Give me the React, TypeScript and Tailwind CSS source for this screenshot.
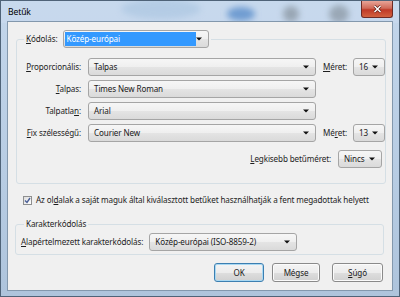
import React from "react";

const font = { fontFamily: '"Noto Sans", "Open Sans", sans-serif' };

function Arrow() {
  return (
    <svg width="6" height="4" viewBox="0 0 6 4" className="shrink-0">
      <path d="M0 0.5 L6 0.5 L3 3.5 Z" fill="#111" />
    </svg>
  );
}

function Select({ cls, text, focused }: { cls: string; text: string; focused?: boolean }) {
  return (
    <div
      className={`flex h-[18px] items-center justify-between rounded-[3px] border border-[#a5a5a5] bg-[linear-gradient(to_bottom,#f6f6f6_0%,#efefef_50%,#e4e4e4_51%,#dadada_100%)] pr-[6px] ${cls}`}
    >
      {focused ? (
        <span className="ml-[1px] flex h-[14px] w-[131px] items-center bg-[#3399ff] pl-[2px] text-white">{text}</span>
      ) : (
        <span className="pl-[5px] text-[#1a1a1a]">{text}</span>
      )}
      <Arrow />
    </div>
  );
}

function Btn({ cls, children, def }: { cls: string; children: React.ReactNode; def?: boolean }) {
  return (
    <div
      className={`flex h-[19px] items-center justify-center rounded-[3px] border ${
        def ? "border-[#3c7fb1] shadow-[inset_0_0_0_1px_#a9d8f2]" : "border-[#8a8a8a] shadow-[inset_0_0_0_1px_#fbfbfb]"
      } bg-[linear-gradient(to_bottom,#f4f4f4_0%,#ececec_50%,#dedede_51%,#d0d0d0_100%)] text-[#1a1a1a] ${cls}`}
    >
      {children}
    </div>
  );
}

function Row({ label, sel, extra }: { label: React.ReactNode; sel: string; extra?: React.ReactNode }) {
  return (
    <div className="flex h-[18px] items-center">
      <div className="w-[59px] text-right">{label}</div>
      <Select cls="ml-[7px] w-[228px]" text={sel} />
      {extra}
    </div>
  );
}

function Meret({ u, v }: { u: "M" | "r"; v: string }) {
  return (
    <>
      <span className="ml-[7px] w-[30px]">
        {u === "M" ? (
          <>
            <u>M</u>éret:
          </>
        ) : (
          <>
            Mé<u>r</u>et:
          </>
        )}
      </span>
      <Select cls="w-[32px]" text={v} />
    </>
  );
}

export default function App() {
  return (
    <div
      className="relative h-[297px] w-[400px] overflow-hidden border border-[#4f6378] bg-[linear-gradient(to_bottom,#c3d6eb,#b7cce3_60%,#aec4dc)] text-[8.1px] leading-none tracking-[-0.12px]"
      style={font}
    >
      {/* glass blobs */}
      <svg className="absolute left-0 top-0" width="400" height="22">
        <defs>
          <filter id="b" x="-50%" y="-50%" width="200%" height="200%">
            <feGaussianBlur stdDeviation="3" />
          </filter>
        </defs>
        <rect x="0" y="0" width="400" height="22" fill="#c9dbee" opacity="0.6" />
        <ellipse cx="160" cy="8" rx="40" ry="10" fill="#a8c4e0" filter="url(#b)" opacity="0.6" />
        <ellipse cx="240" cy="13" rx="14" ry="7" fill="#6f9cd1" filter="url(#b)" />
        <ellipse cx="290" cy="13" rx="8" ry="8" fill="#8d9aa6" filter="url(#b)" opacity="0.8" />
        <ellipse cx="338" cy="13" rx="10" ry="9" fill="#8e9ba8" filter="url(#b)" opacity="0.8" />
      </svg>

      <div className="relative flex h-[20px] items-start">
        <span className="ml-[7px] mt-[7px] text-[8.6px] text-black">Betűk</span>
        <div className="ml-auto mr-[6px] flex h-[17px] w-[32px] items-center justify-center rounded-b-[3px] border border-t-0 border-[#6d2b25] bg-[linear-gradient(to_bottom,#e8a497_0%,#d06a59_45%,#bf3a27_55%,#d2613f_100%)]">
          <svg width="9" height="8" viewBox="0 0 9 8">
            <path d="M1.5 1 L7.5 7 M7.5 1 L1.5 7" stroke="#5a1b12" strokeWidth="2.8" />
            <path d="M1.5 1 L7.5 7 M7.5 1 L1.5 7" stroke="#ffffff" strokeWidth="1.5" />
          </svg>
        </div>
      </div>

      {/* client area */}
      <div className="relative ml-[6px] h-[270px] w-[386px] border border-[#8398ad] bg-[#f0f0f0] pl-[8px] text-[#1e1e1e]">
        <fieldset className="mt-[8px] w-[367px] rounded-[3px] border border-[#d5dfe5] pb-[15px] pl-[5px]">
          <legend className="ml-[2px] flex items-center px-[2px]">
            <span className="mr-[5px]">
              <u>K</u>ódolás:
            </span>
            <Select cls="w-[146px]" text="Közép-európai" focused />
          </legend>
          <div className="mt-[10px] flex flex-col gap-[4px]">
            <Row
              label={
                <>
                  <u>P</u>roporcionális:
                </>
              }
              sel="Talpas"
              extra={<Meret u="M" v="16" />}
            />
            <Row
              label={
                <>
                  <u>T</u>alpas:
                </>
              }
              sel="Times New Roman"
            />
            <Row
              label={
                <>
                  Talpatla<u>n</u>:
                </>
              }
              sel="Arial"
            />
            <Row
              label={
                <>
                  <u>F</u>ix szélességű:
                </>
              }
              sel="Courier New"
              extra={<Meret u="r" v="13" />}
            />
          </div>
          <div className="mt-[8px] flex h-[18px] items-center justify-end pr-[3px]">
            <span className="mr-[7px]">
              <u>L</u>egkisebb betűméret:
            </span>
            <Select cls="w-[44px]" text="Nincs" />
          </div>
        </fieldset>

        <div className="mt-[11px] flex h-[10px] items-center pl-[7px]">
          <div className="flex h-[9px] w-[9px] items-center justify-center border border-[#8e8f8f] bg-[linear-gradient(135deg,#dcdcdc,#ffffff)]">
            <svg width="7" height="7" viewBox="0 0 7 7">
              <path d="M1 3.5 L3 5.5 L6 1" stroke="#4a5f97" strokeWidth="1.4" fill="none" />
            </svg>
          </div>
          <span className="ml-[4px]">
            Az ol<u>d</u>alak a saját maguk által kiválasztott betűket használhatják a fent megadottak helyett
          </span>
        </div>

        <fieldset className="mt-[15px] w-[369px] -ml-[1px] rounded-[3px] border border-[#d5dfe5] pb-[3px] pl-[5px]">
          <legend className="ml-[3px] px-[2px]">Karakterkódolás</legend>
          <div className="mt-[5px] flex h-[18px] items-center">
            <span>
              <u>A</u>lapértelmezett karakterkódolás:
            </span>
            <Select cls="ml-[6px] w-[148px]" text="Közép-európai (ISO-8859-2)" />
          </div>
        </fieldset>

        <div className="mt-[8px] flex w-[367px] justify-end">
          <Btn cls="w-[50px]" def>
            OK
          </Btn>
          <Btn cls="ml-[8px] w-[48px]">Mégse</Btn>
          <Btn cls="ml-[12px] w-[51px]">
            <u>S</u>úgó
          </Btn>
        </div>
      </div>
    </div>
  );
}
